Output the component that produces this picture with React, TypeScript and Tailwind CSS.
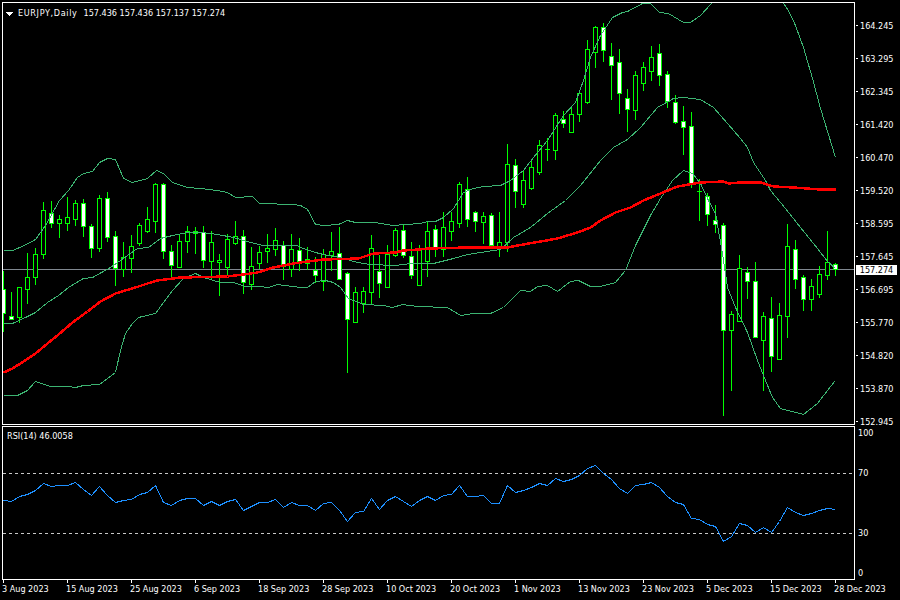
const C: [number, number, number, number, number][] = [
[271,289,313,331,1],[292,316,319,319,1],[287,287,317,322,0],[253,277,289,303,0],[248,254,277,284,0],[202,210,254,258,0],[201,213,223,227,1],[215,219,223,237,0],
[197,217,223,230,0],[200,203,219,225,0],[199,203,226,236,1],[224,226,248,257,1],[195,198,248,251,0],[192,198,237,241,1],[231,236,268,285,1],[242,257,269,276,0],
[235,246,258,272,0],[223,225,243,245,0],[207,219,231,232,0],[183,184,221,232,0],[183,184,251,258,1],[245,251,265,277,1],[235,241,267,267,0],[226,231,241,252,0],
[227,231,233,253,2],[226,232,260,267,1],[231,242,261,279,0],[254,260,262,295,0],[234,239,267,275,0],[221,236,243,244,0],[230,236,282,293,1],[247,266,284,289,0],
[246,252,263,268,0],[234,248,251,262,0],[228,240,249,255,0],[241,245,266,279,1],[234,249,269,276,0],[238,250,261,270,1],[247,259,263,269,0],[257,270,275,282,1],
[249,254,281,290,0],[232,251,255,270,0],[227,253,279,279,1],[272,273,319,372,1],[287,292,322,322,0],[287,291,303,312,0],[235,248,292,304,0],[255,271,283,297,1],
[245,254,287,287,0],[228,230,255,256,0],[224,230,255,257,1],[242,256,275,278,1],[245,249,285,285,0],[222,231,261,276,0],[225,229,247,256,1],[212,227,249,256,0],
[212,221,231,240,0],[182,184,223,227,0],[177,189,219,226,1],[211,212,221,231,1],[212,216,222,243,0],[213,215,245,246,1],[212,242,246,256,0],[144,164,242,251,0],
[159,165,191,207,1],[171,180,204,207,0],[161,167,188,189,0],[140,145,172,174,0],[138,149,149,160,2],[113,115,150,159,0],[111,119,123,127,1],[106,114,132,132,0],
[90,93,114,121,0],[40,49,102,103,0],[26,27,52,67,0],[23,27,50,61,1],[43,56,65,99,1],[49,62,93,113,1],[89,98,109,131,1],[71,75,110,119,0],
[62,67,83,90,0],[46,57,71,80,0],[44,53,75,85,1],[71,74,101,107,1],[95,102,122,123,1],[106,121,127,154,1],[112,126,183,187,1],[179,191,191,220,2],
[193,196,214,225,1],[205,220,224,232,1],[223,225,330,415,1],[311,314,330,390,0],[255,268,321,321,0],[267,272,281,298,1],[262,281,337,337,1],[312,316,340,390,0],
[297,318,356,371,1],[303,315,359,359,0],[224,246,316,337,0],[240,249,279,288,1],[275,277,299,310,1],[279,286,299,310,0],[266,274,294,297,0],[231,262,275,279,0],
[263,264,269,275,1],
];
const toPts = (p: number[][]) => p.map(([x, y]) => `${x + 0.5},${y + 0.5}`).join(" ");
const UPPER = [[3,250],[12,250],[24,245],[35,239],[45,225],[59,200],[68,190],[77,177],[83,173],[92,171],[99,162],[107,158],[115,159],[123,178],[132,182],[147,178],[156,170],[163,173],[172,182],[187,187],[200,188],[217,190],[227,192],[235,197],[252,196],[259,203],[293,204],[300,205],[307,209],[315,224],[323,225],[338,224],[347,220],[355,222],[375,222],[392,225],[420,223],[427,221],[435,221],[443,217],[453,208],[463,192],[473,188],[483,186],[500,185],[510,180],[523,170],[533,157],[547,140],[563,115],[575,102],[583,80],[590,57],[600,35],[612,17],[622,12],[627,11],[642,3],[650,3],[659,12],[668,13],[683,22],[690,22],[700,15],[711,3],[720,-6],[775,-6],[783,3],[788,10],[795,25],[803,47],[812,78],[820,108],[835,157]];
const MID = [[3,323],[12,323],[25,317],[35,312],[47,302],[58,295],[68,287],[83,278],[92,277],[110,267],[127,255],[137,248],[148,247],[160,238],[172,235],[187,232],[202,232],[217,234],[233,237],[250,242],[263,245],[297,245],[300,247],[315,252],[323,254],[340,257],[357,262],[370,264],[395,265],[410,263],[433,263],[453,258],[467,254],[480,252],[500,249],[513,237],[530,227],[547,213],[565,200],[580,185],[600,160],[613,147],[627,139],[640,127],[657,107],[673,98],[683,97],[700,99],[713,107],[727,123],[740,138],[747,147],[753,162],[765,180],[770,190],[785,208],[800,227],[817,248],[827,261],[835,268]];
const LOWER = [[3,395],[17,395],[27,390],[35,381],[50,386],[67,386],[75,387],[83,385],[99,384],[115,372],[120,350],[125,333],[132,323],[138,317],[155,313],[163,302],[172,290],[183,278],[195,273],[203,277],[220,282],[233,282],[245,286],[258,286],[268,287],[277,284],[300,287],[307,287],[315,281],[325,280],[333,282],[340,287],[348,298],[363,304],[383,305],[392,307],[402,304],[417,306],[447,307],[460,315],[473,313],[490,313],[503,307],[520,290],[530,291],[537,286],[547,285],[557,291],[570,281],[578,280],[590,286],[600,286],[615,282],[625,270],[635,245],[650,215],[660,198],[672,180],[683,170],[692,173],[700,183],[708,200],[715,213],[722,253],[727,287],[735,307],[747,332],[757,360],[763,375],[772,397],[780,408],[803,414],[817,403],[827,390],[834,381]];
const RED = [[3,372],[12,368],[23,361],[35,353],[47,343],[58,334],[72,322],[87,311],[100,301],[115,293],[135,287],[147,283],[157,280],[180,277],[227,276],[243,274],[257,272],[273,267],[283,265],[293,263],[300,262],[323,259],[358,258],[373,253],[395,252],[403,250],[418,249],[428,248],[467,247],[507,247],[517,245],[540,241],[557,238],[577,232],[590,227],[600,220],[615,212],[630,207],[643,200],[660,193],[677,186],[700,182],[723,181],[728,183],[740,182],[760,182],[773,186],[793,187],[820,189],[835,189]];
const RSI = [241,244,227,223,211,190,199,196,196,187,208,226,199,226,246,241,236,223,217,196,247,256,241,235,235,256,243,256,242,238,271,258,247,247,238,262,247,256,256,271,250,247,271,302,277,273,235,266,241,227,243,259,241,229,241,226,223,196,229,229,226,250,250,196,217,211,202,189,196,175,184,178,166,145,136,160,178,205,220,196,193,187,202,229,245,253,295,298,313,319,364,349,310,316,337,322,337,304,262,277,286,280,271,265,268];
const PRICES = ["164.245","163.295","162.345","161.420","160.470","159.520","158.595","157.645","156.695","155.770","154.820","153.870","152.945"];
const DATES = ["3 Aug 2023","15 Aug 2023","25 Aug 2023","6 Sep 2023","18 Sep 2023","28 Sep 2023","10 Oct 2023","20 Oct 2023","1 Nov 2023","13 Nov 2023","23 Nov 2023","5 Dec 2023","15 Dec 2023","28 Dec 2023"];

function Candles() {
  return (
    <>
      {C.map(([wt, bt, bb, wb, kind], i) => {
        const x = 3 + 8 * i;
        return (
          <g key={i}>
            <line x1={x + 0.5} x2={x + 0.5} y1={wt} y2={wb + 1} stroke="#00ff00" />
            {kind === 2 ? (
              <rect x={x - 2} y={bt} width={5} height={Math.max(1, bb - bt + 1)} fill="#00ff00" />
            ) : (
              <rect x={x - 1.5} y={bt + 0.5} width={4} height={bb - bt} fill={kind ? "#ffffff" : "#000000"} stroke="#00ff00" />
            )}
          </g>
        );
      })}
    </>
  );
}

export default function App() {
  return (
    <div className="w-[900px] h-[600px] bg-black text-white overflow-hidden flex flex-col pt-[2px] font-['DejaVu_Sans_Condensed','Liberation_Sans',sans-serif] text-[9px] leading-[11px]">
      <div className="flex h-[423px] shrink-0">
        <div className="relative ml-[2px] w-[853px] h-[423px] border border-white shrink-0">
          <svg className="block" width="851" height="421" viewBox="3 3 851 421" shapeRendering="crispEdges" fill="none">
            <line x1="3" x2="854" y1="269.5" y2="269.5" stroke="#808890" />
            <Candles />
            <polyline points={toPts(UPPER)} stroke="#3cb371" />
            <polyline points={toPts(MID)} stroke="#3cb371" />
            <polyline points={toPts(LOWER)} stroke="#3cb371" />
            <polyline points={toPts(RED)} stroke="#ff0000" strokeWidth="2.5" />
          </svg>
          <div className="absolute left-[3px] top-[5px] flex items-center">
            <svg width="7" height="4" viewBox="0 0 7 4" shapeRendering="crispEdges"><polygon points="0,0 7,0 3.5,4" fill="#fff" /></svg>
            <span className="ml-[5px] tracking-[0.65px]">EURJPY,Daily</span>
            <span className="ml-[6px]">157.436 157.436 157.137 157.274</span>
          </div>
        </div>
        <div className="relative flex-1 pt-[7px]">
          {PRICES.map((p) => (
            <div key={p} className="flex items-center h-[33px] shrink-0">
              <span className="ml-px w-[2px] h-px bg-white shrink-0" />
              <span className="ml-[2px] pt-[2px]">{p}</span>
            </div>
          ))}
          <div className="absolute left-[1px] top-[263px] w-[41px] h-[10px] bg-white text-black flex items-center justify-center">157.274</div>
        </div>
      </div>
      <div className="flex h-[154px] mt-px shrink-0">
        <div className="relative ml-[2px] w-[853px] h-[154px] border border-white shrink-0">
          <svg className="block" width="851" height="152" viewBox="3 427 851 152" shapeRendering="crispEdges" fill="none">
            <line x1="3" x2="854" y1="473.5" y2="473.5" stroke="#c8c8c8" strokeDasharray="3 3" />
            <line x1="3" x2="854" y1="533.5" y2="533.5" stroke="#c8c8c8" strokeDasharray="3 3" />
            <polyline points={RSI.map((v, i) => `${3.5 + 8 * i},${Math.round(v / 3 + 420) + 0.5}`).join(" ")} stroke="#1e90ff" />
          </svg>
          <span className="absolute left-[4px] top-[4px]">RSI(14) 46.0058</span>
        </div>
        <div className="flex flex-col flex-1 pl-[3px] pt-[2px]">
          <span>100</span>
          <span className="mt-[29px]">70</span>
          <span className="mt-[49px]">30</span>
          <span className="mt-[29px]">0</span>
        </div>
      </div>
      <div className="flex pl-[3px]">
        {DATES.map((d) => (
          <div key={d} className="w-[64px] shrink-0 flex flex-col">
            <span className="w-px h-[3px] bg-white" />
            <span className="whitespace-nowrap -ml-[1px] mt-[1px]">{d}</span>
          </div>
        ))}
      </div>
    </div>
  );
}
